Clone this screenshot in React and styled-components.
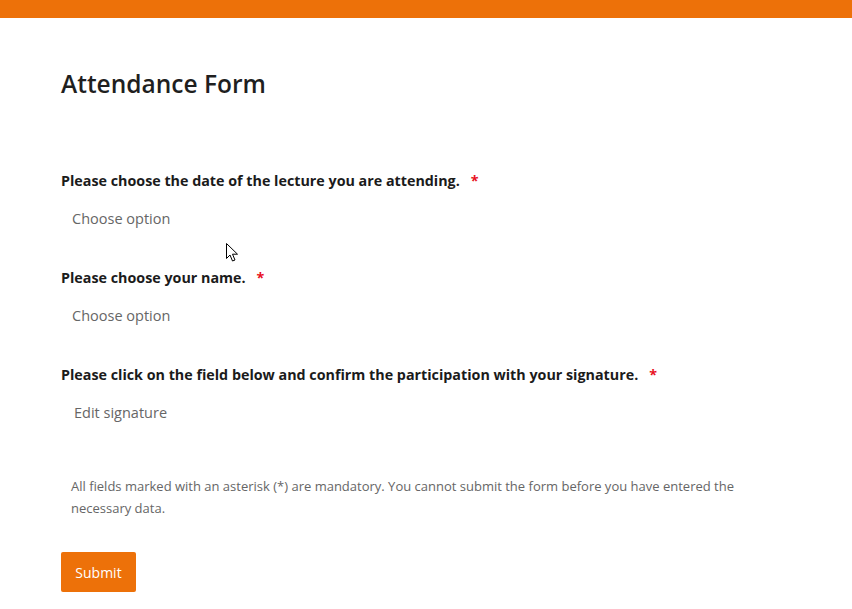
import React from 'react'
import styled, { createGlobalStyle } from 'styled-components'

const GlobalStyle = createGlobalStyle`
  html, body {
    margin: 0;
    padding: 0;
    background: #ffffff;
    font-family: "Open Sans", "Noto Sans", sans-serif;
  }
`

const questions = [
  { label: 'Please choose the date of the lecture you are attending.', placeholder: 'Choose option' },
  { label: 'Please choose your name.', placeholder: 'Choose option' },
  { label: 'Please click on the field below and confirm the participation with your signature.', placeholder: 'Edit signature', signature: true },
]

function Cursor() {
  return (
    <CursorWrap>
      <svg width="13" height="20" viewBox="0 0 13 20">
        <path
          d="M0.5 0.5 L0.5 15.5 L4 12 L6.5 18 L9 17 L6.5 11.2 L11.5 11.2 Z"
          fill="#ffffff"
          stroke="#000000"
          strokeWidth="1"
          strokeLinejoin="miter"
        />
      </svg>
    </CursorWrap>
  )
}

function App() {
  return (
    <Page>
      <GlobalStyle />
      <TopBar />
      <Content>
        <Title>Attendance Form</Title>
        <Fields>
          {questions.map((q) => (
            <Field key={q.label}>
              <Label>
                {q.label}
                <Star>*</Star>
              </Label>
              <Placeholder signature={q.signature}>{q.placeholder}</Placeholder>
            </Field>
          ))}
        </Fields>
        <Note>
          All fields marked with an asterisk (*) are mandatory. You cannot submit the form before you have entered the
          necessary data.
        </Note>
        <SubmitButton>Submit</SubmitButton>
      </Content>
      <Cursor />
    </Page>
  )
}

const Page = styled.div`
  position: relative;
  width: 852px;
  height: 609px;
  overflow: hidden;
  background: #ffffff;
`

const TopBar = styled.div`
  height: 18px;
  background: #ed7109;
`

const Content = styled.div`
  padding: 50px 61px 0 61px;
  display: flex;
  flex-direction: column;
`

const Title = styled.h1`
  margin: 0;
  font-size: 24.5px;
  font-weight: 600;
  color: #1f1f1f;
  line-height: 32px;
`

const Fields = styled.div`
  margin-top: 71px;
  display: flex;
  flex-direction: column;
  gap: 39px;
`

const Field = styled.div`
  display: flex;
  flex-direction: column;
`

const Label = styled.div`
  font-size: 14.3px;
  font-weight: 700;
  color: #1b1b1b;
  line-height: 20px;
`

const Star = styled.span`
  color: #e81123;
  margin-left: 11px;
  font-weight: 700;
`

const Placeholder = styled.div`
  margin-top: 18px;
  padding-left: ${(p) => (p.signature ? '13px' : '11px')};
  font-size: 14.5px;
  color: #666666;
  line-height: 20px;
`

const Note = styled.p`
  margin: 52px 0 0 10px;
  font-size: 13px;
  line-height: 22px;
  color: #666666;
  max-width: 672px;
`

const SubmitButton = styled.button`
  margin-top: 33px;
  align-self: flex-start;
  width: 75px;
  height: 40px;
  border: none;
  border-radius: 2px;
  background: #ed7109;
  color: #ffffff;
  font-family: "Open Sans", "Noto Sans", sans-serif;
  font-size: 14px;
  font-weight: 500;
  cursor: pointer;
`

const CursorWrap = styled.div`
  position: absolute;
  left: 226px;
  top: 243px;
  line-height: 0;
`

export default App
